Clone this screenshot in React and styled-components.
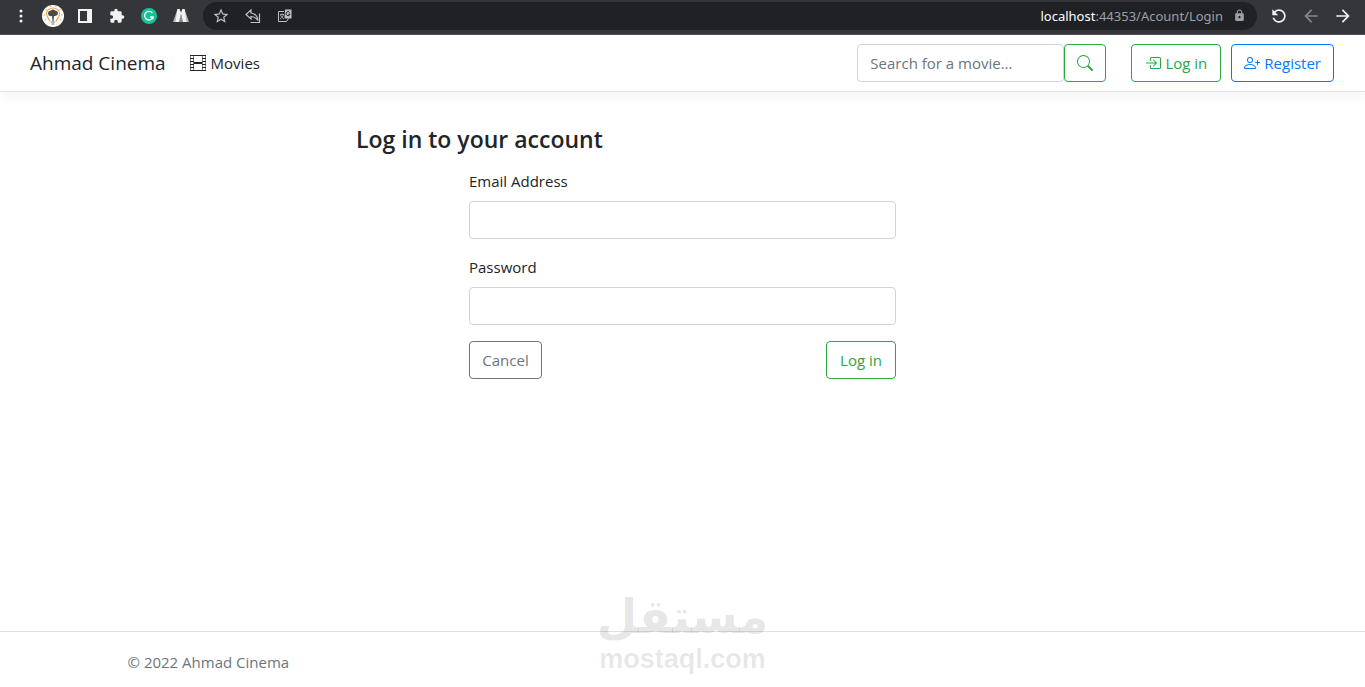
import React, { useState } from 'react';
import styled, { createGlobalStyle } from 'styled-components';
import { BsSearch, BsBoxArrowInRight, BsPersonPlus, BsThreeDotsVertical } from 'react-icons/bs';
import { MdExtension, MdStarBorder, MdLock, MdRefresh, MdArrowBack, MdArrowForward } from 'react-icons/md';

const GlobalStyle = createGlobalStyle`
  *, *::before, *::after {
    box-sizing: border-box;
  }

  body {
    margin: 0;
    background: #fff;
    color: #212529;
    font-family: 'Open Sans', 'Noto Sans', sans-serif;
    font-size: 15px;
    line-height: 24px;
  }
`;

const Page = styled.div`
  display: flex;
  flex-direction: column;
  min-height: 100vh;
`;

/* browser toolbar */

const Toolbar = styled.div`
  display: flex;
  align-items: center;
  height: 35px;
  padding: 0 6px 3px 5px;
  background: #35363a;
  border-bottom: 1px solid #505155;
`;

const ToolButton = styled.button`
  display: flex;
  align-items: center;
  justify-content: center;
  flex: none;
  width: 32px;
  height: 28px;
  padding: 0;
  border: 0;
  background: none;
  color: ${props => props.$color || '#f1f3f4'};
`;

const AddressBar = styled.div`
  display: flex;
  align-items: center;
  flex: 1;
  min-width: 0;
  height: 28px;
  margin: 0 6px;
  padding: 0 2px;
  border-radius: 14px;
  background: #202124;
`;

const Address = styled.span`
  flex: 1;
  color: #9aa0a6;
  font-family: 'Noto Sans', 'Open Sans', sans-serif;
  font-size: 13px;
  line-height: 20px;
  text-align: right;
  white-space: nowrap;
`;

const Host = styled.span`
  color: #fff;
`;

const Mirrored = styled.span`
  display: flex;
  transform: scaleX(-1);
`;

/* site */

const Navbar = styled.header`
  display: flex;
  align-items: center;
  justify-content: space-between;
  padding: 9px 31px 9px 30px;
  background: #fff;
  border-bottom: 1px solid #dee2e6;
  box-shadow: 0 4px 12px rgba(0, 0, 0, .05);
`;

const NavGroup = styled.nav`
  display: flex;
  align-items: center;
  gap: ${props => props.$gap}px;
`;

const Brand = styled.a`
  color: #212529;
  font-size: 19px;
  line-height: 30px;
  text-decoration: none;
  white-space: nowrap;
`;

const NavLink = styled.a`
  display: flex;
  align-items: center;
  gap: 5px;
  color: #212529;
  text-decoration: none;
`;

const SearchForm = styled.form`
  display: flex;
  margin-right: 15px;
`;

const Input = styled.input`
  width: ${props => props.$width || '100%'};
  height: 38px;
  padding: 6px 12px;
  border: 1px solid #ced4da;
  border-radius: 4px;
  background: #fff;
  color: #495057;
  font: inherit;

  &::placeholder {
    color: #6c757d;
    opacity: 1;
  }
`;

const colors = {
  success: '#28a745',
  primary: '#007bff',
  secondary: '#6c757d',
};

const Button = styled.button`
  display: flex;
  align-items: center;
  justify-content: center;
  gap: 4px;
  min-width: ${props => props.$minWidth || 42}px;
  height: 38px;
  padding: 0 12px;
  border: 1px solid ${props => colors[props.$variant]};
  border-radius: 4px;
  background: #fff;
  color: ${props => colors[props.$variant]};
  font: inherit;
  text-decoration: none;
  white-space: nowrap;
`;

const Main = styled.main`
  flex: 1;
  width: 100%;
  max-width: 653px;
  margin: 0 auto;
  padding: 33px 0;
`;

const Title = styled.h1`
  margin: 0 0 16px;
  font-size: 23px;
  font-weight: 600;
  line-height: 28px;
`;

const LoginForm = styled.form`
  display: flex;
  flex-direction: column;
  gap: 16px;
  max-width: 427px;
  margin: 0 auto;
`;

const Field = styled.div`
  display: flex;
  flex-direction: column;
  gap: 8px;
`;

const Actions = styled.div`
  display: flex;
  justify-content: space-between;
`;

const Footer = styled.footer`
  position: relative;
  padding: 18px 0 13px;
  border-top: 1px solid #dee2e6;
  color: #6c757d;
`;

const Container = styled.div`
  max-width: 1140px;
  margin: 0 auto;
  padding: 0 15px;
`;

const Watermark = styled.div`
  position: absolute;
  left: 50%;
  bottom: 13px;
  display: flex;
  flex-direction: column;
  align-items: center;
  transform: translateX(-50%);
  color: rgba(0, 0, 0, .1);
  font-weight: 700;
  pointer-events: none;
`;

const WatermarkArabic = styled.span`
  font-family: 'DejaVu Sans', sans-serif;
  font-size: 47px;
  line-height: 54px;
`;

const WatermarkLatin = styled.span`
  font-family: 'Liberation Sans', sans-serif;
  font-size: 27px;
  line-height: 30px;
`;

const AvatarIcon = () => (
  <svg width="22" height="22" viewBox="0 0 22 22">
    <circle cx="11" cy="11" r="11" fill="#fff" />
    <path d="M8 16.500c0-2-3.500-3.500-3.500-8a6.500 5.500 0 0 1 13 0c0 4.500-3.500 6-3.500 8" fill="none" stroke="#ef9d3c" strokeWidth="1.100" />
    <path d="M1.500 10h1.500M19 10h1.500M3.500 4l1.500 1.500M18.500 4L17 5.500M8 1l.5 1M14 1l-.5 1M3 15l1.500-1M19 15l-1.500-1" stroke="#ef9d3c" />
    <path d="M6 8.500c0-2 1.500-3 3-3 1-1.500 3-1.500 4 0 2 0 3 1.500 3 3-.5 2-2.500 2.500-4 2.500L11.500 16h-1L10 11c-2 .5-4-.5-4-2.500z" fill="#4b4a4a" />
    <path d="M9 17h4M9.500 19h3" stroke="#777" />
  </svg>
);

const PanelIcon = () => (
  <svg width="14" height="14" viewBox="0 0 14 14">
    <path d="M0 0h14v14H0zM2 2v10h7V2z" fill="#f1f3f4" fillRule="evenodd" />
  </svg>
);

const GrammarIcon = () => (
  <svg width="16" height="16" viewBox="0 0 16 16">
    <circle cx="8" cy="8" r="8" fill="#15c39a" />
    <path d="M11.300 5A4.300 4.300 0 1 0 12 9H9.200M12 9v2.300" fill="none" stroke="#fff" strokeWidth="1.300" />
  </svg>
);

const PeaksIcon = () => (
  <svg width="16" height="13" viewBox="0 0 16 13">
    <path d="M0 13L4.500 0h2L8 4l1.500-4h2L16 13z" fill="#b4b5b8" />
    <path d="M4.500 0h2L8 4 6 13H2.500z" fill="#f1f3f4" />
    <path d="M9.500 0h2l2 13H10L8 4z" fill="#f1f3f4" />
    <path d="M8 5l2 8H6z" fill="#8b8c8f" />
  </svg>
);

const ShareIcon = () => (
  <svg width="16" height="16" viewBox="0 0 16 16" fill="none" stroke="#bdc1c6" strokeWidth="1.200">
    <path d="M6 2L1 6.500 6 11V8.500c3 0 5 1 7 4-.5-4-2.500-7-7-7.500z" />
    <path d="M5.500 14.500h9V5.500" />
  </svg>
);

const TranslateIcon = () => (
  <svg width="16" height="16" viewBox="0 0 16 16">
    <path d="M7 3.500H1.500v10h8l2-3" fill="none" stroke="#bdc1c6" />
    <path d="M8 1.500h6.500v9H7.500z" fill="#bdc1c6" />
    <path d="M12.700 4.500a2 2 0 1 0 .3 1.700H11.300" fill="none" stroke="#202124" />
    <path d="M3 6.500h4M5 5.500v1M6.500 6.500c-.5 2-1.500 3.500-3.500 4.500M3.500 7c.5 1.500 2 3 3.500 4" fill="none" stroke="#bdc1c6" strokeWidth=".8" />
  </svg>
);

const FilmIcon = () => (
  <svg width="16" height="16" viewBox="0 0 16 16" fill="none">
    <path d="M.5 1v14M15.500 1v14M3.500 1v14M12.500 1v14" stroke="#7d7f82" />
    <path d="M0 .5h16M0 15.500h16M0 3.500h4M0 6.500h4M0 9.500h4M0 12.500h4M12 3.500h4M12 6.500h4M12 9.500h4M12 12.500h4" stroke="#212529" />
    <path d="M4 8h8" stroke="#212529" strokeWidth="2" />
  </svg>
);

const BrowserToolbar = () => (
  <Toolbar>
    <ToolButton aria-label="Menu"><BsThreeDotsVertical size={16} /></ToolButton>
    <ToolButton aria-label="Profile"><AvatarIcon /></ToolButton>
    <ToolButton aria-label="Side panel"><PanelIcon /></ToolButton>
    <ToolButton aria-label="Extensions"><MdExtension size={16} /></ToolButton>
    <ToolButton aria-label="Grammar"><GrammarIcon /></ToolButton>
    <ToolButton aria-label="Peaks"><PeaksIcon /></ToolButton>
    <AddressBar>
      <ToolButton aria-label="Bookmark" $color="#bdc1c6"><MdStarBorder size={18} /></ToolButton>
      <ToolButton aria-label="Share"><ShareIcon /></ToolButton>
      <ToolButton aria-label="Translate"><TranslateIcon /></ToolButton>
      <Address><Host>localhost</Host>:44353/Acount/Login</Address>
      <ToolButton aria-label="Site information" $color="#9aa0a6"><MdLock size={13} /></ToolButton>
    </AddressBar>
    <ToolButton aria-label="Reload"><Mirrored><MdRefresh size={20} /></Mirrored></ToolButton>
    <ToolButton aria-label="Back" $color="#85868a"><MdArrowBack size={20} /></ToolButton>
    <ToolButton aria-label="Forward"><MdArrowForward size={20} /></ToolButton>
  </Toolbar>
);

const App = () => {
  const [search, setSearch] = useState('');
  const [email, setEmail] = useState('');
  const [password, setPassword] = useState('');

  const onSubmit = (e) => e.preventDefault();

  return (
    <>
      <GlobalStyle />
      <Page>
        <BrowserToolbar />
        <Navbar>
          <NavGroup $gap={24}>
            <Brand href="#">Ahmad Cinema</Brand>
            <NavLink href="#movies"><FilmIcon />Movies</NavLink>
          </NavGroup>
          <NavGroup $gap={10}>
            <SearchForm onSubmit={onSubmit}>
              <Input
                $width="207px"
                aria-label="Search for a movie"
                placeholder="Search for a movie..."
                value={search}
                onChange={e => setSearch(e.target.value)}
              />
              <Button $variant="success" aria-label="Search"><BsSearch size={16} /></Button>
            </SearchForm>
            <Button as="a" href="#login" $variant="success" $minWidth={90}><BsBoxArrowInRight size={16} />Log in</Button>
            <Button as="a" href="#register" $variant="primary"><BsPersonPlus size={16} />Register</Button>
          </NavGroup>
        </Navbar>
        <Main>
          <Title>Log in to your account</Title>
          <LoginForm onSubmit={onSubmit}>
            <Field>
              <label htmlFor="email">Email Address</label>
              <Input id="email" type="email" value={email} onChange={e => setEmail(e.target.value)} />
            </Field>
            <Field>
              <label htmlFor="password">Password</label>
              <Input id="password" type="password" value={password} onChange={e => setPassword(e.target.value)} />
            </Field>
            <Actions>
              <Button type="button" $variant="secondary" $minWidth={73}>Cancel</Button>
              <Button type="submit" $variant="success" $minWidth={70}>Log in</Button>
            </Actions>
          </LoginForm>
        </Main>
        <Footer>
          <Container>© 2022 Ahmad Cinema</Container>
          <Watermark>
            <WatermarkArabic lang="ar" dir="rtl">مستقل</WatermarkArabic>
            <WatermarkLatin>mostaql.com</WatermarkLatin>
          </Watermark>
        </Footer>
      </Page>
    </>
  );
};

export default App;
